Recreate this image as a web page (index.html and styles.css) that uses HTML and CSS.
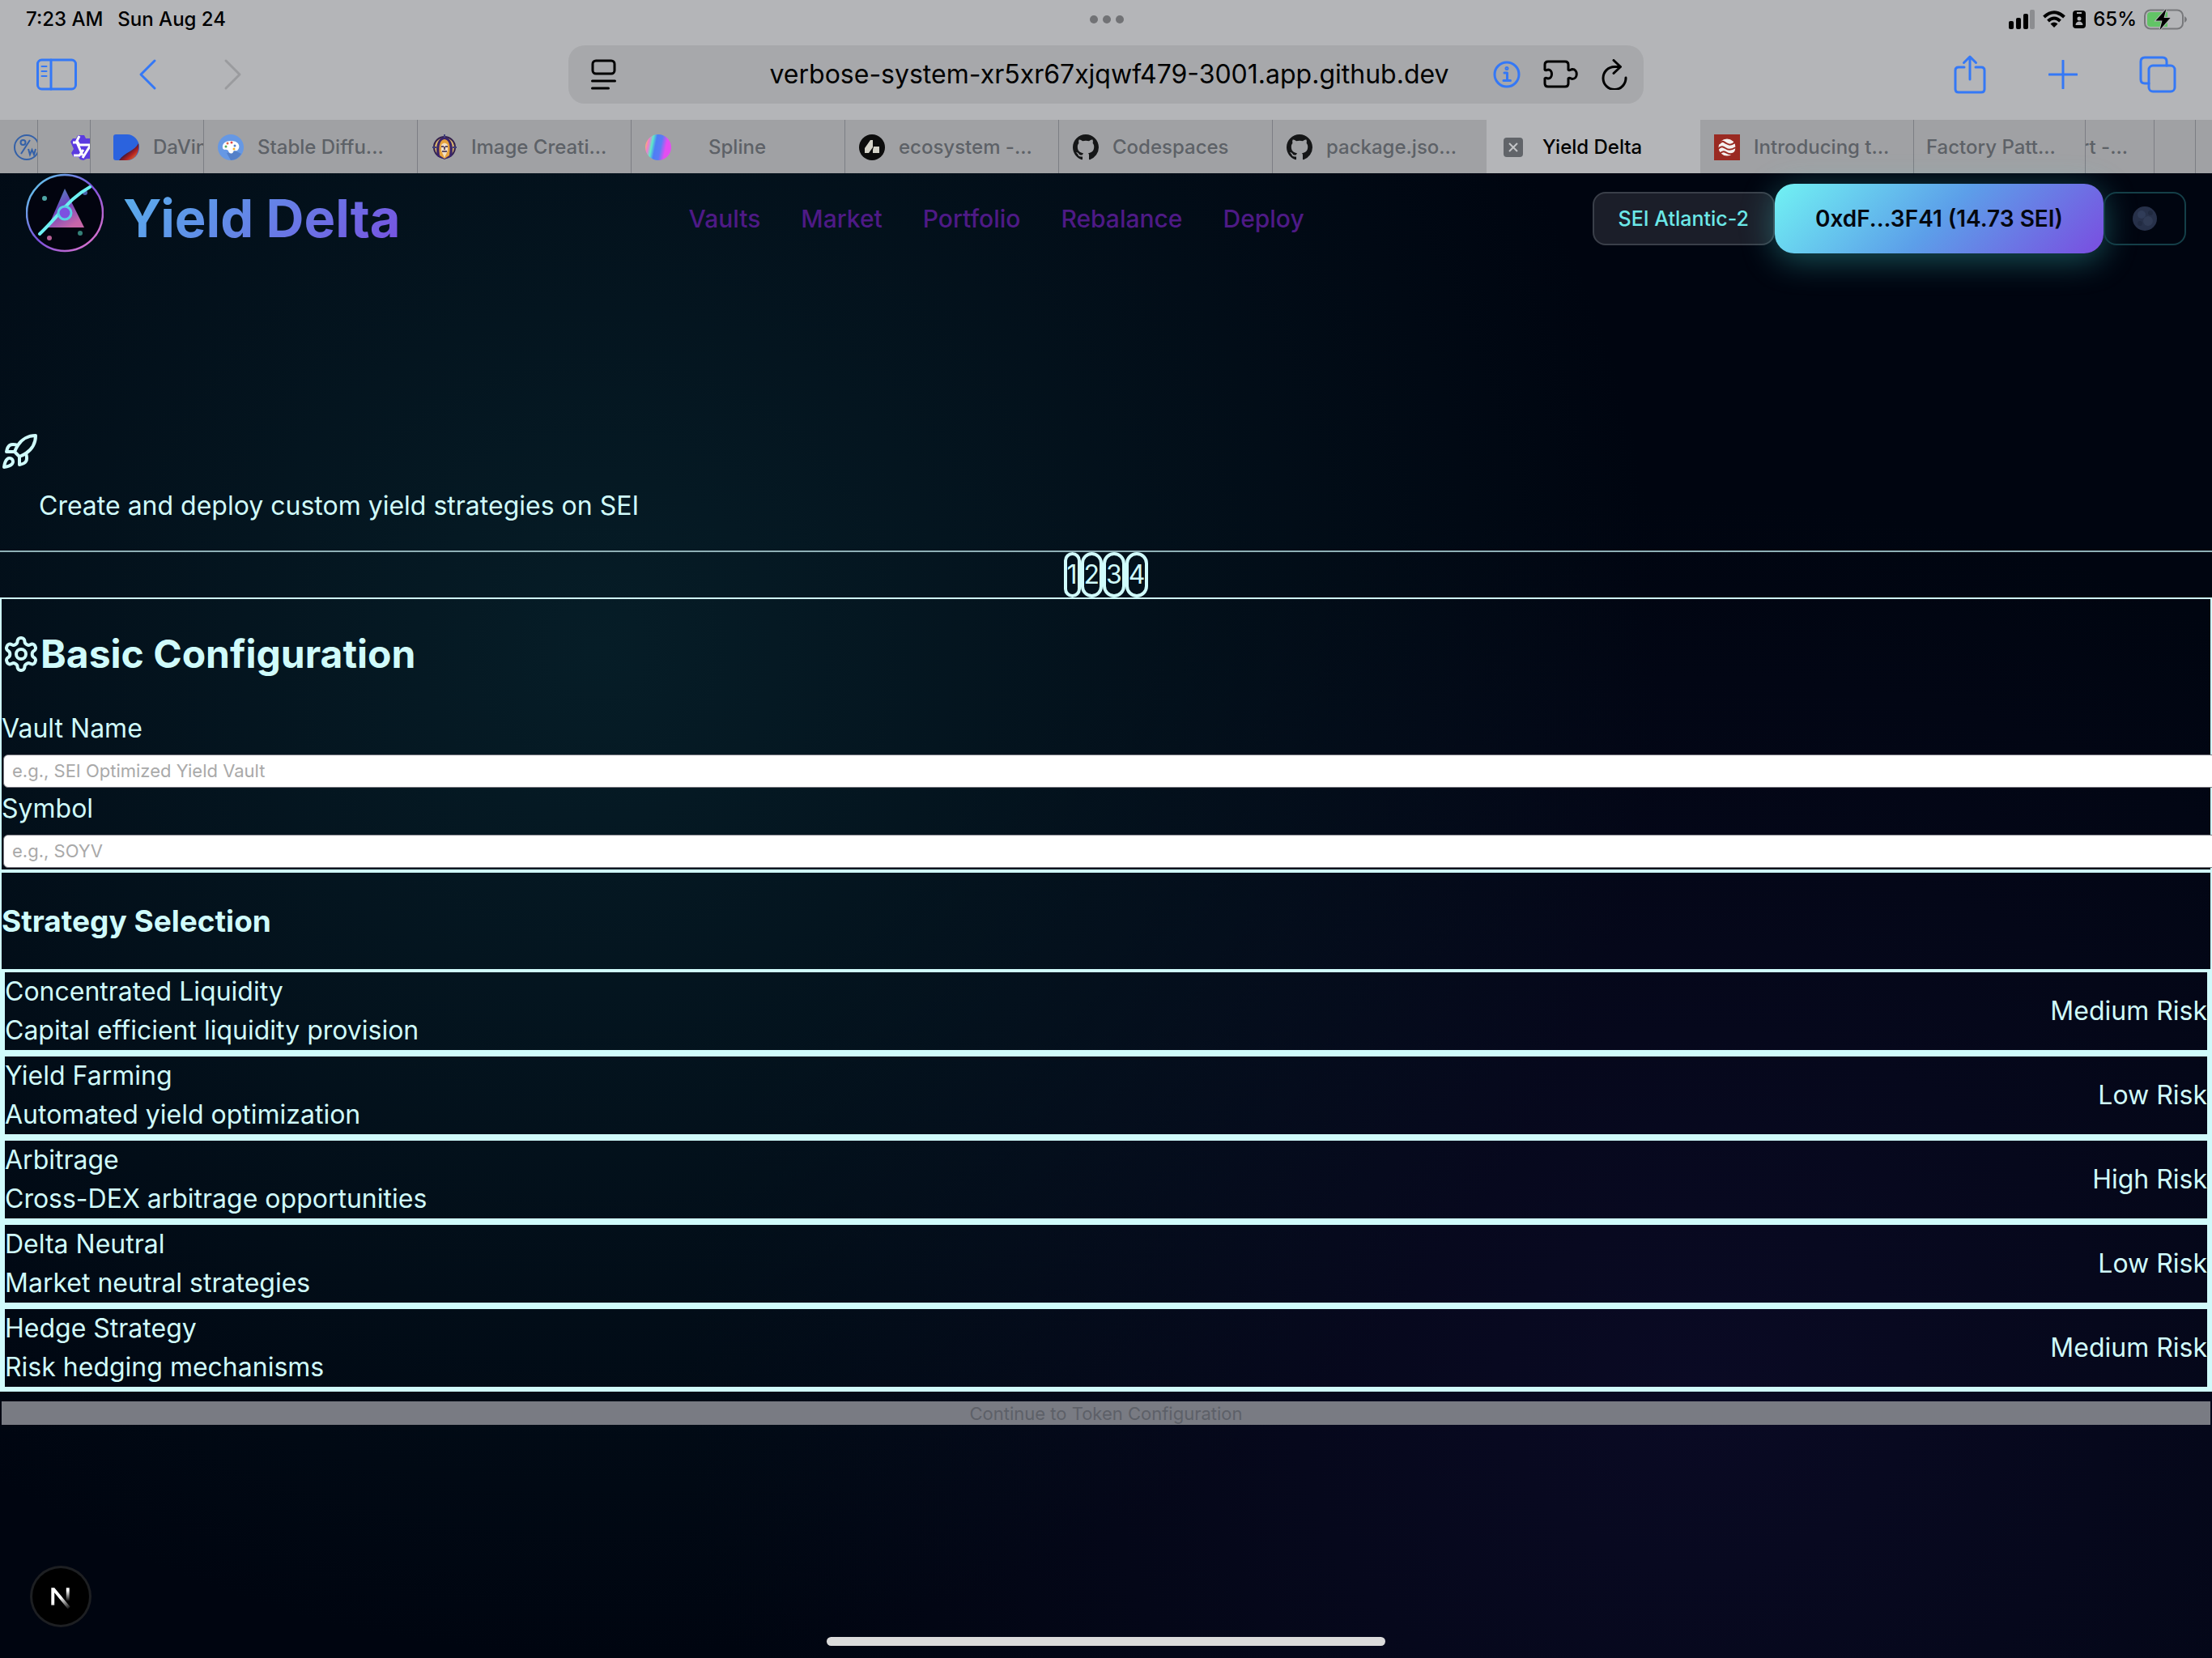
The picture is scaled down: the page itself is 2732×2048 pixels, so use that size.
FILE: index.html
```html
<!DOCTYPE html>
<html lang="en">
<head>
<meta charset="utf-8">
<title>Yield Delta</title>
<link rel="stylesheet" href="styles.css">
</head>
<body>
<div class="browser">
  <div class="status">
    <div class="status-side"><span>7:23 AM</span><span>Sun Aug 24</span></div>
    <div class="dots"><i></i><i></i><i></i></div>
    <div class="status-side status-right">
      <svg width="34" height="28" viewBox="0 0 34 28"><rect x="1" y="16" width="6" height="10" rx="2"/><rect x="10" y="12" width="6" height="14" rx="2"/><rect x="19" y="7" width="6" height="19" rx="2"/><rect x="27" y="2" width="6" height="24" rx="2" fill="#8c8d90"/></svg>
      <svg width="28" height="22" viewBox="0 0 28 22" fill="none" stroke="#000" stroke-width="4"><path d="M1.500 8Q14-3.500 26.500 8M6.500 13Q14 6 21.500 13"/><path d="M14 21L9.500 16.500Q14 12.500 18.500 16.500Z" fill="#000" stroke="none"/></svg>
      <svg width="16" height="22" viewBox="0 0 16 22"><rect width="16" height="22" rx="4"/><path d="M5 3h6" stroke="#b4b5b8" stroke-width="2"/><circle cx="8" cy="10" r="2.500" fill="#b4b5b8"/><path d="M3.500 18c0-6 9-6 9 0z" fill="#b4b5b8"/></svg>
      <span>65%</span>
      <svg width="54" height="26" viewBox="0 0 54 26"><rect x="1" y="1.500" width="47" height="23" rx="7" fill="none" stroke="#77787b" stroke-width="2"/><path d="M8 4h21v18H8a4 4 0 0 1-4-4V8a4 4 0 0 1 4-4z" fill="#62c466"/><path d="M50 9q6 4 0 8z" fill="#77787b"/><path d="M27.500 0L14.500 14.500h8L19.500 26 32.500 11h-8z" stroke="#b4b5b8" stroke-width="2" paint-order="stroke"/></svg>
    </div>
  </div>
  <div class="toolbar">
    <div class="tools tools-left">
      <button class="tool" aria-label="Sidebar"><svg width="52" height="42" viewBox="0 0 52 42"><rect x="2.500" y="3" width="47" height="36" rx="5"/><path d="M19 3v36"/><path d="M7.500 11h6M7.500 17h6M7.500 23h6" stroke-width="2"/></svg></button>
      <button class="tool" aria-label="Back"><svg width="24" height="40" viewBox="0 0 24 40"><path d="M21 3L4 20l17 17"/></svg></button>
      <button class="tool tool-off" aria-label="Forward"><svg width="24" height="40" viewBox="0 0 24 40"><path d="M3 3l17 17L3 37"/></svg></button>
    </div>
    <div class="address">
      <svg width="32" height="38" viewBox="0 0 32 38"><rect x="2" y="2" width="27" height="16" rx="4"/><path d="M1.500 27h28M1.500 36h20"/></svg>
      <span class="url">verbose-system-xr5xr67xjqwf479-3001.app.github.dev</span>
      <div class="address-icons">
        <svg width="34" height="34" viewBox="0 0 34 34" class="blue"><circle cx="17" cy="17" r="15"/><path d="M14 15h3.500v9M13 24.500h8.500"/><circle cx="17" cy="9.500" r="1" /></svg>
        <svg width="44" height="36" viewBox="0 0 44 36"><path d="M6 2h21q4 0 4 4v6c1 2 3 0 5-.5 7 0 7 12 0 12-2-.5-4-2.500-5-.5v6q0 4-4 4H6q-4 0-4-4v-6c1-2 3 0 4 0 6 0 6-11 0-11-1 0-3 2-4 0V6q0-4 4-4z"/></svg>
        <svg width="32" height="38" viewBox="0 0 32 38"><path d="M23 9.500H16a14 14 0 1 0 14 13.500M15 1.500l8.500 8-8.500 8"/></svg>
      </div>
    </div>
    <div class="tools tools-right">
      <button class="tool" aria-label="Share"><svg width="42" height="50" viewBox="0 0 42 50"><path d="M14 16H7q-4 0-4 4v23q0 4 4 4h28q4 0 4-4V20q0-4-4-4h-7M21 31V3M13.500 10.500L21 3l7.500 7.500"/></svg></button>
      <button class="tool" aria-label="New tab"><svg width="36" height="36" viewBox="0 0 36 36"><path d="M18 1v34M1 18h34"/></svg></button>
      <button class="tool" aria-label="Tabs"><svg width="46" height="46" viewBox="0 0 46 46"><rect x="12" y="12" width="32" height="32" rx="5"/><path d="M12 34H7q-5 0-5-5V7q0-5 5-5h22q5 0 5 5v5"/></svg></button>
    </div>
  </div>
  <div class="tabs">
    <div class="tab tab-w47"><svg class="fav" viewBox="0 0 32 32" fill="none" stroke="#3461a8" stroke-width="2"><circle cx="16" cy="16" r="15"/><circle cx="11.500" cy="10" r="3"/><path d="M20 7l-11 17M18 18l2 7 2.500-6 2.500 6 2-7"/></svg></div>
    <div class="tab tab-w65 pad-wide"><svg class="fav" viewBox="0 0 32 32"><path d="M9 1h8l2 4h9l4 8-3 5 2 6-5 6h-6l-4 2-4-1-2-3H4l-3-5 3-5-4-9 3-4h4z" fill="#5b3be0"/><path d="M11 2L8 8l3 5h21M3 10h5l7 16M25 13l-10 16M4 26h7l5-7" fill="none" stroke="#fff" stroke-width="3"/></svg></div>
    <div class="tab tab-w140 pad-mid"><svg class="fav" viewBox="0 0 32 32"><defs><linearGradient id="dv" x1="0" y1="0" x2="1" y2="1"><stop offset=".4" stop-color="#1a1740"/><stop offset=".65" stop-color="#b02020"/><stop offset="1" stop-color="#f59a40"/></linearGradient></defs><path d="M3 0h14a15 16 0 0 1 0 32H3q-3 0-3-3V3q0-3 3-3z" fill="#2b63de"/><path d="M31 11C27 20 14 22 7 32h10c9 0 16-9 14-21z" fill="url(#dv)"/></svg><span>DaVinci</span></div>
    <div class="tab tab-w264"><svg class="fav" viewBox="0 0 32 32"><circle cx="16" cy="16" r="16" fill="#6698e4"/><path d="M21 20l8 4a16 16 0 0 1-13 8l-5-9z" fill="#5580c8"/><path d="M16 8c12 0 12 9 8 12-3 1-4-1-5 2-2 3-6 1-6-2-2-2-6 0-7-3C5 11 10 8 16 8z" fill="#fff"/><circle cx="10" cy="15" r="1.500" fill="#57a85a"/><circle cx="12" cy="11" r="1.500" fill="#e06a4a"/><circle cx="17" cy="10" r="1.500" fill="#e0484a"/><circle cx="21" cy="14" r="1.500" fill="#5580c8"/><circle cx="20" cy="18" r="1.500" fill="#f0b030"/></svg><span>Stable Diffu...</span></div>
    <div class="tab tab-w264"><svg class="fav" viewBox="0 0 32 32"><circle cx="16" cy="16" r="13" fill="#d9b46c" stroke="#33204d" stroke-width="2"/><path d="M7 27C4 12 9 4 16 3c7 1 12 9 9 24l-9 4z" fill="#39246b"/><path d="M10 26C8 12 11 7 16 6c5 1 8 6 6 20l-6 4z" fill="#e6a23c"/><path d="M12 13q4-5 8 0v7l-4 9-4-9z" fill="#f2dfc5"/><path d="M12 15h3M17 15h3M13 21h6M16 15v4" stroke="#30204a" stroke-width="1.500"/><path d="M1 16h5M26 16h5M16 0v4" stroke="#41407a" stroke-width="2"/></svg><span>Image Creati...</span></div>
    <div class="tab tab-w264 tab-center"><svg class="fav" viewBox="0 0 32 32"><defs><linearGradient id="sp" x1="0" y1=".2" x2="1" y2=".4"><stop offset="0" stop-color="#ffc44d"/><stop offset=".15" stop-color="#f07ad0"/><stop offset=".28" stop-color="#5cecc8"/><stop offset=".42" stop-color="#4d7df5"/><stop offset=".62" stop-color="#5a7cf5"/><stop offset=".82" stop-color="#e44df0"/></linearGradient></defs><circle cx="16" cy="16" r="16" fill="url(#sp)"/></svg><span>Spline</span></div>
    <div class="tab tab-w264"><svg class="fav" viewBox="0 0 32 32"><circle cx="16" cy="16" r="16" fill="#0c0c0c"/><path d="M7 23v-6l7-10h3v9l-5 7zM18 15h7v8h-8v-4z" fill="#d4d2c8"/></svg><span>ecosystem -...</span></div>
    <div class="tab tab-w264"><svg class="fav" viewBox="0 0 16 16"><path fill="#151617" d="M8 0C3.580 0 0 3.580 0 8c0 3.540 2.290 6.530 5.470 7.590.4.070.550-.170.550-.380 0-.190-.010-.820-.010-1.490-2.010.370-2.530-.490-2.690-.940-.090-.230-.480-.940-.820-1.130-.280-.150-.680-.520-.010-.530.630-.010 1.080.580 1.230.820.720 1.210 1.870.870 2.330.660.070-.520.280-.870.510-1.070-1.780-.200-3.640-.890-3.640-3.950 0-.870.310-1.590.820-2.150-.080-.200-.360-1.020.080-2.120 0 0 .670-.210 2.200.820.640-.180 1.320-.270 2-.270s1.360.090 2 .270c1.530-1.040 2.200-.820 2.200-.820.440 1.100.160 1.920.080 2.120.510.560.820 1.270.820 2.150 0 3.070-1.870 3.750-3.650 3.950.290.250.540.730.540 1.480 0 1.070-.010 1.930-.010 2.200 0 .210.150.460.550.380A8.010 8.010 0 0 0 16 8c0-4.420-3.580-8-8-8z"/></svg><span>Codespaces</span></div>
    <div class="tab tab-w264 tab-last"><svg class="fav" viewBox="0 0 16 16"><path fill="#151617" d="M8 0C3.580 0 0 3.580 0 8c0 3.540 2.290 6.530 5.470 7.590.4.070.550-.170.550-.380 0-.190-.010-.820-.010-1.490-2.010.370-2.530-.490-2.690-.940-.090-.230-.480-.940-.820-1.130-.280-.150-.680-.520-.010-.530.630-.010 1.080.580 1.230.820.720 1.210 1.870.870 2.330.660.070-.520.280-.870.510-1.070-1.780-.200-3.640-.890-3.640-3.950 0-.870.310-1.590.820-2.150-.080-.200-.360-1.020.080-2.120 0 0 .670-.210 2.200.820.640-.180 1.320-.270 2-.270s1.360.090 2 .270c1.530-1.040 2.200-.820 2.200-.820.440 1.100.160 1.920.080 2.120.510.560.820 1.270.820 2.150 0 3.070-1.870 3.750-3.650 3.950.290.250.540.730.540 1.480 0 1.070-.010 1.930-.010 2.200 0 .210.150.460.550.380A8.010 8.010 0 0 0 16 8c0-4.420-3.580-8-8-8z"/></svg><span>package.jso...</span></div>
    <div class="tab tab-w264 tab-active"><svg width="24" height="24" viewBox="0 0 24 24"><rect width="24" height="24" rx="4" fill="#616469"/><path d="M7 7l10 10M17 7L7 17" stroke="#c4c5c8" stroke-width="2"/></svg><span>Yield Delta</span></div>
    <div class="tab tab-w264"><svg class="fav" viewBox="0 0 32 32"><path d="M0 0h32v32H0z" fill="#9a2a22"/><circle cx="16" cy="16" r="10.500" fill="#f5f1ef"/><path d="M6 12c4-5 6-3 9-1s6 3 12-2M5 18c4-4 6-3 9-1s6 3 13-1M7 24c4-4 6-3 9-1s5 2 9 0" fill="none" stroke="#9a2a22" stroke-width="2"/></svg><span>Introducing t...</span></div>
    <div class="tab tab-w212"><span>Factory Patt...</span></div>
    <div class="tab tab-w85 tab-clipped"><span>art -...</span></div>
    <div class="tab tab-w51"></div>
    <div class="tab tab-rest"></div>
  </div>
</div>

<div class="page">
  <header class="site-header">
    <a class="brand" href="#">
      <svg width="96" height="98" viewBox="0 0 96 98"><defs><linearGradient id="ring" x1="0" y1="0" x2="1" y2="1"><stop offset="0" stop-color="#5fe0ee"/><stop offset=".5" stop-color="#7a50dc"/><stop offset="1" stop-color="#f07ac8"/></linearGradient><linearGradient id="tri" x1="0" y1="0" x2=".6" y2="1"><stop offset="0" stop-color="#4f9fc0"/><stop offset=".5" stop-color="#6c46bf"/><stop offset="1" stop-color="#c766a8"/></linearGradient></defs><circle cx="48" cy="49" r="47" fill="#02040f" stroke="url(#ring)" stroke-width="2.500"/><path d="M48 19L72 67H27z" fill="url(#tri)"/><circle cx="73" cy="24" r="3" fill="#4a5fa8"/><path d="M17 75C34 59 46 43 58 32Q68 23 79 17" fill="none" stroke="#6df0f2" stroke-width="4" stroke-linecap="round"/><circle cx="48" cy="49" r="8" fill="#7d50e0" stroke="#58d2e4" stroke-width="3"/><circle cx="23" cy="31" r="3" fill="#4fa5a5"/><circle cx="67" cy="74" r="3" fill="#348078"/><circle cx="29" cy="80" r="3" fill="#b55f95"/></svg>
      <span>Yield Delta</span>
    </a>
    <nav class="nav"><a href="#">Vaults</a><a href="#">Market</a><a href="#">Portfolio</a><a href="#">Rebalance</a><a href="#">Deploy</a></nav>
    <div class="wallet">
      <button class="network">SEI Atlantic-2</button>
      <button class="account">0xdF...3F41 (14.73 SEI)</button>
      <button class="theme" aria-label="Theme"><svg width="30" height="30" viewBox="0 0 30 30"><circle cx="15" cy="15" r="15" fill="#27314a"/><circle cx="11" cy="10" r="5" fill="#303c58"/><circle cx="19" cy="18" r="6" fill="#303b55"/><circle cx="22" cy="8" r="3" fill="#202a40"/><circle cx="9" cy="21" r="3" fill="#222b42"/></svg></button>
    </div>
  </header>

  <main>
    <div class="intro">
      <svg class="icon" viewBox="0 0 24 24"><path d="M4.500 16.500c-1.500 1.260-2 5-2 5s3.740-.5 5-2c.710-.840.700-2.130-.090-2.910a2.180 2.180 0 0 0-2.910-.090z"/><path d="m12 15-3-3a22 22 0 0 1 2-3.950A12.880 12.880 0 0 1 22 2c0 2.720-.780 7.500-6 11a22.350 22.350 0 0 1-4 2z"/><path d="M9 12H4s.550-3.030 2-4c1.620-1.080 5 0 5 0"/><path d="M12 15v5s3.030-.550 4-2c1.080-1.620 0-5 0-5"/></svg>
      <p>Create and deploy custom yield strategies on SEI</p>
    </div>
    <div class="steps"><span>1</span><span>2</span><span>3</span><span>4</span></div>

    <section class="card">
      <h2><svg class="icon" viewBox="0 0 24 24"><path d="M12.220 2h-.440a2 2 0 0 0-2 2v.180a2 2 0 0 1-1 1.730l-.430.250a2 2 0 0 1-2 0l-.150-.080a2 2 0 0 0-2.730.730l-.220.380a2 2 0 0 0 .730 2.730l.150.100a2 2 0 0 1 1 1.720v.510a2 2 0 0 1-1 1.740l-.150.090a2 2 0 0 0-.730 2.730l.220.380a2 2 0 0 0 2.730.730l.150-.080a2 2 0 0 1 2 0l.430.250a2 2 0 0 1 1 1.730V20a2 2 0 0 0 2 2h.440a2 2 0 0 0 2-2v-.180a2 2 0 0 1 1-1.730l.430-.250a2 2 0 0 1 2 0l.150.080a2 2 0 0 0 2.730-.730l.220-.390a2 2 0 0 0-.730-2.730l-.150-.080a2 2 0 0 1-1-1.740v-.5a2 2 0 0 1 1-1.740l.150-.090a2 2 0 0 0 .730-2.730l-.220-.380a2 2 0 0 0-2.730-.730l-.150.080a2 2 0 0 1-2 0l-.430-.250a2 2 0 0 1-1-1.730V4a2 2 0 0 0-2-2z"/><circle cx="12" cy="12" r="3"/></svg>Basic Configuration</h2>
      <label for="name">Vault Name</label>
      <input id="name" type="text" placeholder="e.g., SEI Optimized Yield Vault">
      <label for="symbol">Symbol</label>
      <input id="symbol" type="text" placeholder="e.g., SOYV">
    </section>

    <section class="card">
      <h3>Strategy Selection</h3>
      <div class="strategy"><div><div>Concentrated Liquidity</div><div>Capital efficient liquidity provision</div></div><span>Medium Risk</span></div>
      <div class="strategy"><div><div>Yield Farming</div><div>Automated yield optimization</div></div><span>Low Risk</span></div>
      <div class="strategy"><div><div>Arbitrage</div><div>Cross-DEX arbitrage opportunities</div></div><span>High Risk</span></div>
      <div class="strategy"><div><div>Delta Neutral</div><div>Market neutral strategies</div></div><span>Low Risk</span></div>
      <div class="strategy"><div><div>Hedge Strategy</div><div>Risk hedging mechanisms</div></div><span>Medium Risk</span></div>
    </section>
    <button class="continue" disabled>Continue to Token Configuration</button>
  </main>
  <button class="dev-badge" aria-label="Dev tools"><svg width="70" height="70" viewBox="0 0 72 72"><defs><linearGradient id="n1" x1="0" y1="0" x2="0" y2="1"><stop offset=".2" stop-color="#fff"/><stop offset="1" stop-color="#fff" stop-opacity="0"/></linearGradient><linearGradient id="n2" gradientUnits="userSpaceOnUse" x1="38" y1="36" x2="48" y2="52"><stop offset="0" stop-color="#fff"/><stop offset="1" stop-color="#fff" stop-opacity="0"/></linearGradient></defs><path d="M24 47V25h4l20 24-3 3L28 31v16z" fill="url(#n2)"/><path d="M43 25h4v17h-4z" fill="url(#n1)"/></svg></button>
  <div class="home-indicator"></div>
</div>
</body>
</html>
```
FILE: styles.css
```css
* { box-sizing: border-box; }
body { margin: 0; background: #000510; color: #d0fbfb; font: 32px/48px Inter, sans-serif; min-height: 100vh; display: flex; flex-direction: column; overflow-x: hidden; }
button { font-family: inherit; margin: 0; padding: 0; border: 0; background: none; }
svg { display: block; flex: none; }

.browser { background: #b4b5b8; color: #000; }
.status { display: grid; grid-template-columns: 1fr auto 1fr; align-items: center; height: 48px; padding: 0 30px 0 32px; font-size: 24px; line-height: 32px; font-weight: 500; }
.status-side { display: flex; align-items: center; gap: 18px; }
.status-right { justify-content: flex-end; gap: 9px; }
.dots { display: flex; gap: 6px; }
.dots i { width: 10px; height: 10px; border-radius: 50%; background: #717275; }
.toolbar { display: flex; justify-content: space-between; align-items: center; height: 100px; padding: 0 44px 12px; }
.toolbar svg { fill: none; stroke: currentColor; stroke-width: 3; stroke-linecap: round; stroke-linejoin: round; }
.tools { flex: 1; display: flex; align-items: center; color: #3478f6; }
.tools-left { gap: 74px; }
.tools-right { gap: 76px; justify-content: flex-end; }
.tool { color: inherit; }
.tool-off { color: #9a9b9e; margin-left: 8px; }
.address { flex: 0 1 1328px; height: 72px; border-radius: 20px; background: #a7a8ab; display: grid; grid-template-columns: 1fr auto 1fr; align-items: center; padding: 0 20px 0 28px; }
.url { font-size: 32px; line-height: 48px; white-space: nowrap; }
.address-icons { display: flex; align-items: center; justify-content: flex-end; gap: 28px; }
.address .blue { color: #3478f6; }

.tabs { display: flex; height: 66px; background: #a0a1a4; color: #5d6167; font-size: 24px; line-height: 32px; font-weight: 500; }
.tab { display: flex; align-items: center; gap: 17px; padding: 1px 0 0 17px; overflow: hidden; white-space: nowrap; border-right: 1px solid #7c7e84; flex: none; }
.fav { width: 32px; height: 32px; }
.tab-w47 { width: 47px; }
.tab-w65 { width: 65px; }
.tab-w140 { width: 140px; }
.tab-w264 { width: 264px; }
.tab-w212 { width: 212px; padding-left: 15px; }
.tab-w85 { width: 85px; }
.tab-w51 { width: 51px; }
.tab-rest { flex: 1; border: 0; }
.pad-wide { padding-left: 40px; }
.pad-mid { padding-left: 28px; }
.tab-center span { flex: 1; text-align: center; padding-right: 68px; }
.tab-last { border: 0; }
.tab-active { background: #b4b5b8; color: #000; border: 0; gap: 24px; padding-left: 21px; }
.tab-clipped { justify-content: flex-end; padding: 1px 32px 0 0; }

.page { flex: 1; position: relative; background:
  radial-gradient(ellipse 48% 68% at 27% 32%, #061d27 0%, rgba(6, 29, 39, 0) 100%),
  radial-gradient(ellipse 46% 60% at 77% 82%, #0a0a24 0%, rgba(10, 10, 36, 0) 100%), #000510; }
.site-header { display: flex; align-items: center; justify-content: space-between; padding: 0 32px; height: 112px; }
.brand { display: flex; align-items: center; height: 112px; gap: 24px; text-decoration: none; font-size: 65px; line-height: 80px; font-weight: 700; }
.brand svg { align-self: flex-start; }
.brand span { background: linear-gradient(135deg, #5ab0ec 0%, #5f90e8 35%, #7850e0 100%); -webkit-background-clip: text; background-clip: text; color: transparent; }
.nav { display: flex; gap: 50px; font-size: 30px; font-weight: 500; }
.nav a { color: #4e1a86; text-decoration: none; }
.wallet { display: flex; align-items: center; }
.network { height: 66px; padding: 0 30px; border: 2px solid #3a3f49; border-radius: 16px; background: #1b1e29; color: #6ce8e8; font-size: 25px; font-weight: 500; }
.account { height: 86px; padding: 0 50px; border-radius: 24px; background: linear-gradient(135deg, #71f2f3, #5c9fe9 50%, #7a4de0); color: #04070f; font-size: 28px; font-weight: 600; box-shadow: 0 8px 40px rgba(70, 230, 225, .35); }
.theme { width: 102px; height: 66px; border: 2px solid #143f48; border-radius: 16px; display: flex; align-items: center; justify-content: center; }

.icon { width: 48px; height: 48px; fill: none; stroke: currentColor; stroke-width: 2; stroke-linecap: round; stroke-linejoin: round; }
.intro { padding: 208px 0 31px; border-bottom: 2px solid #8fb0b6; }
.intro p { margin: 19px 48px 0; }
.steps { display: flex; justify-content: center; }
.steps span { border: 4px solid #d0fbfb; border-radius: 16px; }
.card { border: 2px solid #d0fbfb; }
.card h2 { display: flex; align-items: center; margin: 40px 0; font-size: 48px; line-height: 56px; }
.card h3 { margin: 37px 0; font-size: 37px; line-height: 45px; }
.card label { display: block; }
.card input { display: block; width: calc(100% + 8px); height: 41px; margin: 8px 2px 2px; padding: 0 10px 2px; border: 1px solid #77777f; border-radius: 6px; background: #fff; font: 22px/32px Inter, sans-serif; }
.card input::placeholder { color: #a9a9a9; }
.strategy { display: flex; align-items: center; justify-content: space-between; border: 4px solid #d0fbfb; }
.continue { display: block; width: calc(100% - 4px); height: 29px; margin: 12px 2px 0; background: #797b83; color: #5d6068; font-size: 22px; line-height: 28px; }
.dev-badge { position: absolute; left: 40px; bottom: 41px; width: 70px; height: 70px; border-radius: 50%; background: #000; box-shadow: 0 0 0 3px #1d1f22; }
.home-indicator { position: absolute; left: 50%; bottom: 15px; width: 690px; height: 11px; margin-left: -345px; border-radius: 6px; background: #dbdbdb; }
```
